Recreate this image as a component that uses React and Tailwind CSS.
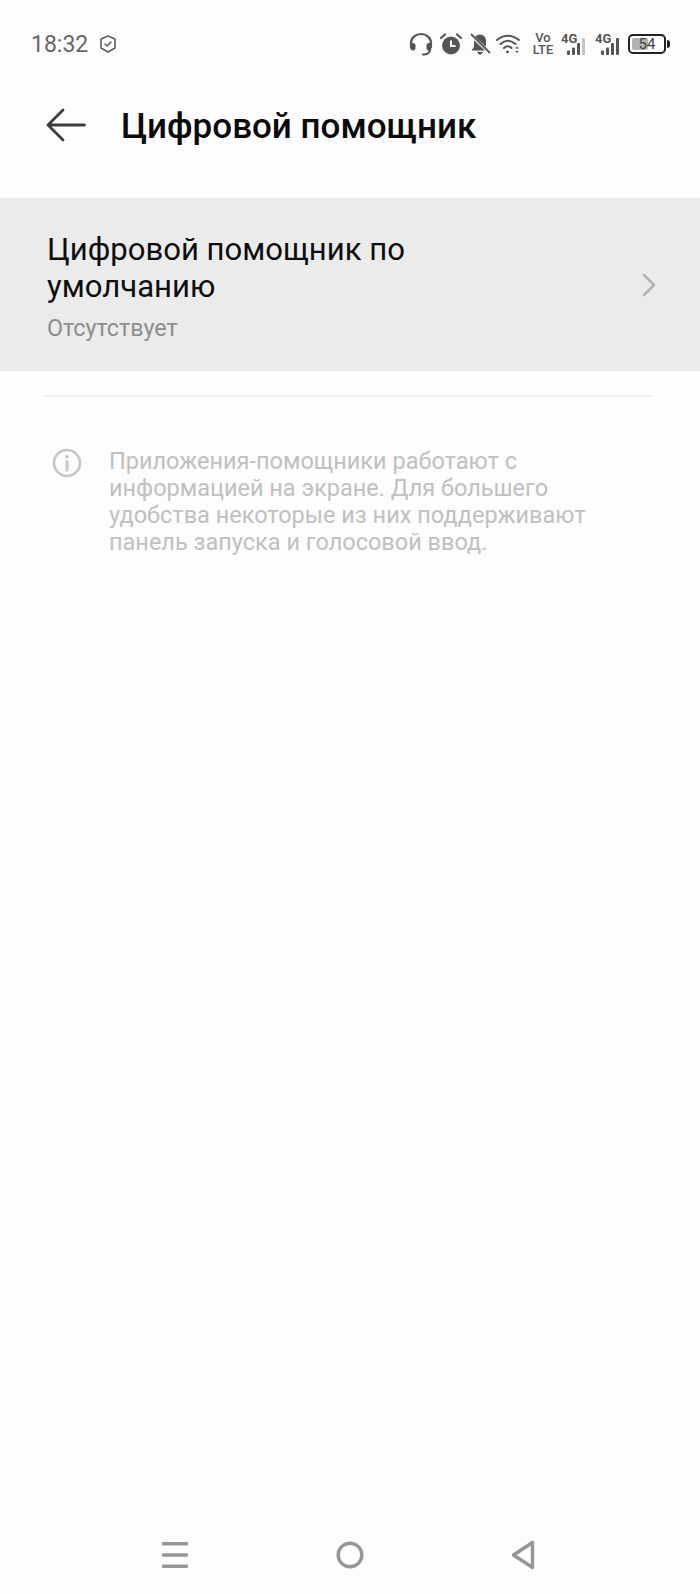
import React from 'react';

const font = { roboto: 'font-["Roboto",sans-serif]' };

// --- Status bar icons ---
const ShieldIcon = () => (
    <svg width="18" height="20" viewBox="0 0 18 20" fill="none" stroke="#5f5f5f" strokeWidth="1.6" strokeLinejoin="round" strokeLinecap="round">
        <path d="M9 2 L16 5 V14 L9 18 L2 14 V5 Z" />
        <path d="M6 10 L8.2 12 L12 8" />
    </svg>
);

const HeadsetIcon = () => (
    <svg width="24" height="24" viewBox="0 0 24 24" fill="none" stroke="#555" strokeWidth="2.2" strokeLinecap="round">
        <path d="M2 15 V11 A10 9 0 0 1 22 11 V15" />
        <rect x="2" y="11.5" width="4" height="6.5" rx="1.6" fill="#555" strokeWidth="1" />
        <rect x="18" y="11.5" width="4" height="6.5" rx="1.6" fill="#555" strokeWidth="1" />
        <path d="M21 18 Q20.5 22.5 14 22.5" />
    </svg>
);

const AlarmIcon = () => (
    <svg width="24" height="24" viewBox="0 0 24 24" fill="none">
        <circle cx="12" cy="13.5" r="9" fill="#555" />
        <path d="M12 8.5 V14 H16.5" stroke="#fff" strokeWidth="2" />
        <path d="M2 6 L6 2.5 M22 6 L18 2.5" stroke="#555" strokeWidth="2.2" strokeLinecap="round" />
    </svg>
);

const BellOffIcon = () => (
    <svg width="24" height="24" viewBox="0 0 24 24" fill="none">
        <path d="M12 2.5 C8 2.5 6 5.5 6 9 V15 L3.5 18.5 H20.5 L18 15 V9 C18 5.5 16 2.5 12 2.5 Z" fill="#555" />
        <path d="M9.5 20.5 H14.5 L12 22.5 Z" fill="#555" stroke="#555" strokeLinejoin="round" />
        <path d="M3 3 L22 21" stroke="#fdfdfd" strokeWidth="3.2" />
        <path d="M3.5 2.5 L21.5 20.5" stroke="#555" strokeWidth="1.8" strokeLinecap="round" />
    </svg>
);

const WifiIcon = () => (
    <svg width="24" height="24" viewBox="0 0 24 24" fill="none" stroke="#555" strokeWidth="2.1" strokeLinecap="round">
        <path d="M1 8 Q11.5 -0.5 23 8" />
        <path d="M4.5 12 Q11.5 5.5 19.5 12" />
        <path d="M8 16 Q11.5 12.5 15.5 16" />
        <circle cx="11.5" cy="20" r="1.4" fill="#555" stroke="none" />
        <path d="M19 16.5 L21 14.5 L23 16.5 Z M19 19 L21 21 L23 19 Z" fill="#555" stroke="none" />
    </svg>
);

const Signal = ({ dimLast }) => (
    <div className="relative w-[28px] h-[24px]">
        <span className={`absolute left-0 top-0 text-[13px] leading-[14px] font-bold text-[#555] ${font.roboto}`}>4G</span>
        <svg className="absolute left-0 top-0" width="28" height="24" viewBox="0 0 28 24" fill="#555">
            <rect x="6" y="18.5" width="3" height="4.5" rx="1" />
            <rect x="11" y="15.5" width="3" height="7.5" rx="1" />
            <rect x="16" y="11" width="3" height="12" rx="1" />
            <rect x="21" y="6" width="3" height="17" rx="1" fill={dimLast ? '#c4c4c4' : '#555'} />
        </svg>
    </div>
);

const Battery = () => (
    <div className="flex items-center gap-[1px]">
        <div className="relative w-[38px] h-[20px] rounded-[5px] border-2 border-[#222] p-[2px]">
            <div className="h-full w-[53%] rounded-[2px] bg-[#b3b3b3]" />
            <span className={`absolute inset-0 flex items-center justify-center text-[15px] text-[#444] ${font.roboto}`}>54</span>
        </div>
        <div className="w-[3px] h-[8px] rounded-r-sm bg-[#222]" />
    </div>
);

// --- Main Component ---
const App = () => {
    return (
        <div className={`flex flex-col h-[1594px] w-[700px] overflow-hidden bg-[#fdfdfd] ${font.roboto}`}>
            {/* Status bar */}
            <div className="flex items-center justify-between h-[44px] mt-[22px] pl-[31px] pr-[30px] shrink-0">
                <div className="flex items-center gap-[11px]">
                    <span className="text-[23px] leading-none text-[#666]">18:32</span>
                    <ShieldIcon />
                </div>
                <div className="flex items-center">
                    <HeadsetIcon />
                    <div className="ml-[6px]"><AlarmIcon /></div>
                    <div className="ml-[5px]"><BellOffIcon /></div>
                    <div className="ml-[4px]"><WifiIcon /></div>
                    <div className="flex flex-col items-center w-[24px] ml-[11px] text-[13px] leading-[12px] font-medium text-[#555]">
                        <span>Vo</span>
                        <span>LTE</span>
                    </div>
                    <div className="ml-[6px]"><Signal dimLast /></div>
                    <div className="ml-[6px]"><Signal /></div>
                    <div className="ml-[5px]"><Battery /></div>
                </div>
            </div>

            {/* Header */}
            <div className="flex items-center h-[66px] mt-[26px] pl-[46px] shrink-0">
                <svg width="40" height="34" viewBox="0 0 40 34" fill="none" stroke="#3c3c3c" strokeWidth="2.8" strokeLinecap="round" strokeLinejoin="round">
                    <path d="M38.5 17 H2 M17 2 L2 17 L17 32" />
                </svg>
                <h1 className="ml-[35px] pt-[2px] text-[35px] leading-none font-medium text-[#0a0a0a]">Цифровой помощник</h1>
            </div>

            {/* Default assistant row */}
            <div className="flex items-center justify-between h-[173px] mt-[40px] pl-[47px] pr-[44px] bg-[#ebebeb] shrink-0">
                <div className="w-[480px] pt-[3px]">
                    <div className="text-[31.1px] leading-[37px] text-[#0d0d0d]">Цифровой помощник по умолчанию</div>
                    <div className="mt-[9px] text-[23.3px] leading-[28px] text-[#8e8e8e]">Отсутствует</div>
                </div>
                <svg width="14" height="24" viewBox="0 0 14 24" fill="none" stroke="#b4b4b4" strokeWidth="2.6" strokeLinecap="round" strokeLinejoin="round">
                    <path d="M2 2 L12 12 L2 22" />
                </svg>
            </div>

            <div className="h-[2px] mt-[24px] ml-[43px] mr-[47px] bg-[#f0f0f0] shrink-0" />

            {/* Note */}
            <div className="flex items-start mt-[51px] pl-[52px] shrink-0">
                <svg width="30" height="30" viewBox="0 0 30 30" fill="none" stroke="#c6c6c6" strokeWidth="2.6">
                    <circle cx="15" cy="15" r="13" />
                    <path d="M15 13.5 V22" strokeWidth="3" strokeLinecap="round" />
                    <circle cx="15" cy="8.8" r="1.8" fill="#c6c6c6" stroke="none" />
                </svg>
                <p className="ml-[27px] w-[510px] text-[23.5px] leading-[27px] text-[#c0c0c0]">
                    Приложения-помощники работают с информацией на экране. Для большего удобства некоторые из них поддерживают панель запуска и голосовой ввод.
                </p>
            </div>

            {/* Navigation bar */}
            <div className="mt-auto mb-[23px] flex items-center justify-between pl-[161px] pr-[165px] h-[32px] shrink-0">
                <svg width="28" height="28" viewBox="0 0 28 28" fill="#969696">
                    <rect x="1" y="1" width="26" height="3.6" rx="1" />
                    <rect x="1" y="12.2" width="26" height="3.6" rx="1" />
                    <rect x="1" y="23.4" width="26" height="3.6" rx="1" />
                </svg>
                <svg width="28" height="28" viewBox="0 0 28 28" fill="none" stroke="#969696" strokeWidth="3.4">
                    <circle cx="14" cy="14" r="11.8" />
                </svg>
                <svg width="24" height="30" viewBox="0 0 24 30" fill="none" stroke="#969696" strokeWidth="3.4" strokeLinejoin="round">
                    <path d="M21.5 2.5 V27.5 L2.5 15 Z" />
                </svg>
            </div>
        </div>
    );
};

export default App;
